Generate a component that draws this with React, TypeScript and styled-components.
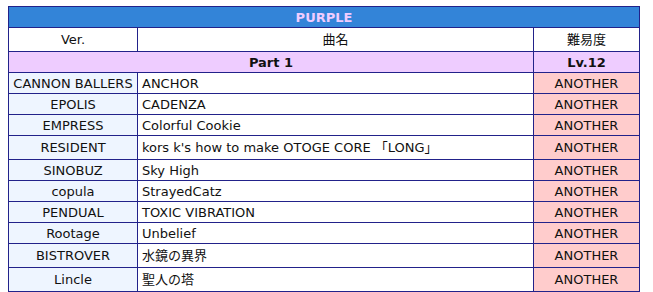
import React from "react";
import styled, { createGlobalStyle } from "styled-components";

const GlobalStyle = createGlobalStyle`
  body {
    margin: 6px 8px;
    background: #ffffff;
    font-family: "DejaVu Sans", Verdana, "Noto Sans CJK JP", sans-serif;
    font-size: 13px;
    color: #111111;
  }
`;

const BORDER = "#22228a";

const Table = styled.table`
  width: 631px;
  border-collapse: collapse;
  table-layout: fixed;
  border: 1px solid ${BORDER};
`;

const Cell = styled.td<{ $bg?: string; $align?: "left" | "center"; $bold?: boolean; $tall?: boolean }>`
  border: 1px solid ${BORDER};
  padding: ${(p) => (p.$tall ? "4px 4px 4px" : "3px 4px 2px")};
  line-height: 15px;
  background: ${(p) => p.$bg ?? "#ffffff"};
  text-align: ${(p) => p.$align ?? "center"};
  font-weight: ${(p) => (p.$bold ? "bold" : "normal")};
  white-space: nowrap;
  overflow: hidden;
`;

const TitleCell = styled.th`
  border: 1px solid ${BORDER};
  padding: 3px 4px 2px;
  line-height: 15px;
  background: #3384d8;
  color: #f0ccff;
  font-weight: bold;
  text-align: center;
`;

const HeadCell = styled.th`
  border: 1px solid ${BORDER};
  padding: 4px 4px 4px;
  line-height: 15px;
  background: #ffffff;
  font-weight: normal;
  text-align: center;
`;

type Song = { ver: string; title: string };

const songs: Song[] = [
  { ver: "CANNON BALLERS", title: "ANCHOR" },
  { ver: "EPOLIS", title: "CADENZA" },
  { ver: "EMPRESS", title: "Colorful Cookie" },
  { ver: "RESIDENT", title: "kors k's how to make OTOGE CORE 「LONG」" },
  { ver: "SINOBUZ", title: "Sky High" },
  { ver: "copula", title: "StrayedCatz" },
  { ver: "PENDUAL", title: "TOXIC VIBRATION" },
  { ver: "Rootage", title: "Unbelief" },
  { ver: "BISTROVER", title: "水鏡の異界" },
  { ver: "Lincle", title: "聖人の塔" },
];

const VER_BG = "#eef5ff";
const PART_BG = "#eeccff";
const ANOTHER_BG = "#ffcccc";

const hasWide = (s: string) => /[^\x00-\x7F]/.test(s);

export default function App() {
  return (
    <>
      <GlobalStyle />
      <Table>
        <colgroup>
          <col style={{ width: 129 }} />
          <col style={{ width: 396 }} />
          <col style={{ width: 106 }} />
        </colgroup>
        <thead>
          <tr>
            <TitleCell colSpan={3}>PURPLE</TitleCell>
          </tr>
          <tr>
            <HeadCell>Ver.</HeadCell>
            <HeadCell>曲名</HeadCell>
            <HeadCell>難易度</HeadCell>
          </tr>
        </thead>
        <tbody>
          <tr>
            <Cell colSpan={2} $bg={PART_BG} $bold>
              Part 1
            </Cell>
            <Cell $bg={PART_BG} $bold>
              Lv.12
            </Cell>
          </tr>
          {songs.map((s) => {
            const tall = hasWide(s.title);
            return (
              <tr key={s.ver}>
                <Cell $bg={VER_BG} $tall={tall}>
                  {s.ver}
                </Cell>
                <Cell $align="left" $tall={tall}>
                  {s.title}
                </Cell>
                <Cell $bg={ANOTHER_BG} $tall={tall}>
                  ANOTHER
                </Cell>
              </tr>
            );
          })}
        </tbody>
      </Table>
    </>
  );
}
